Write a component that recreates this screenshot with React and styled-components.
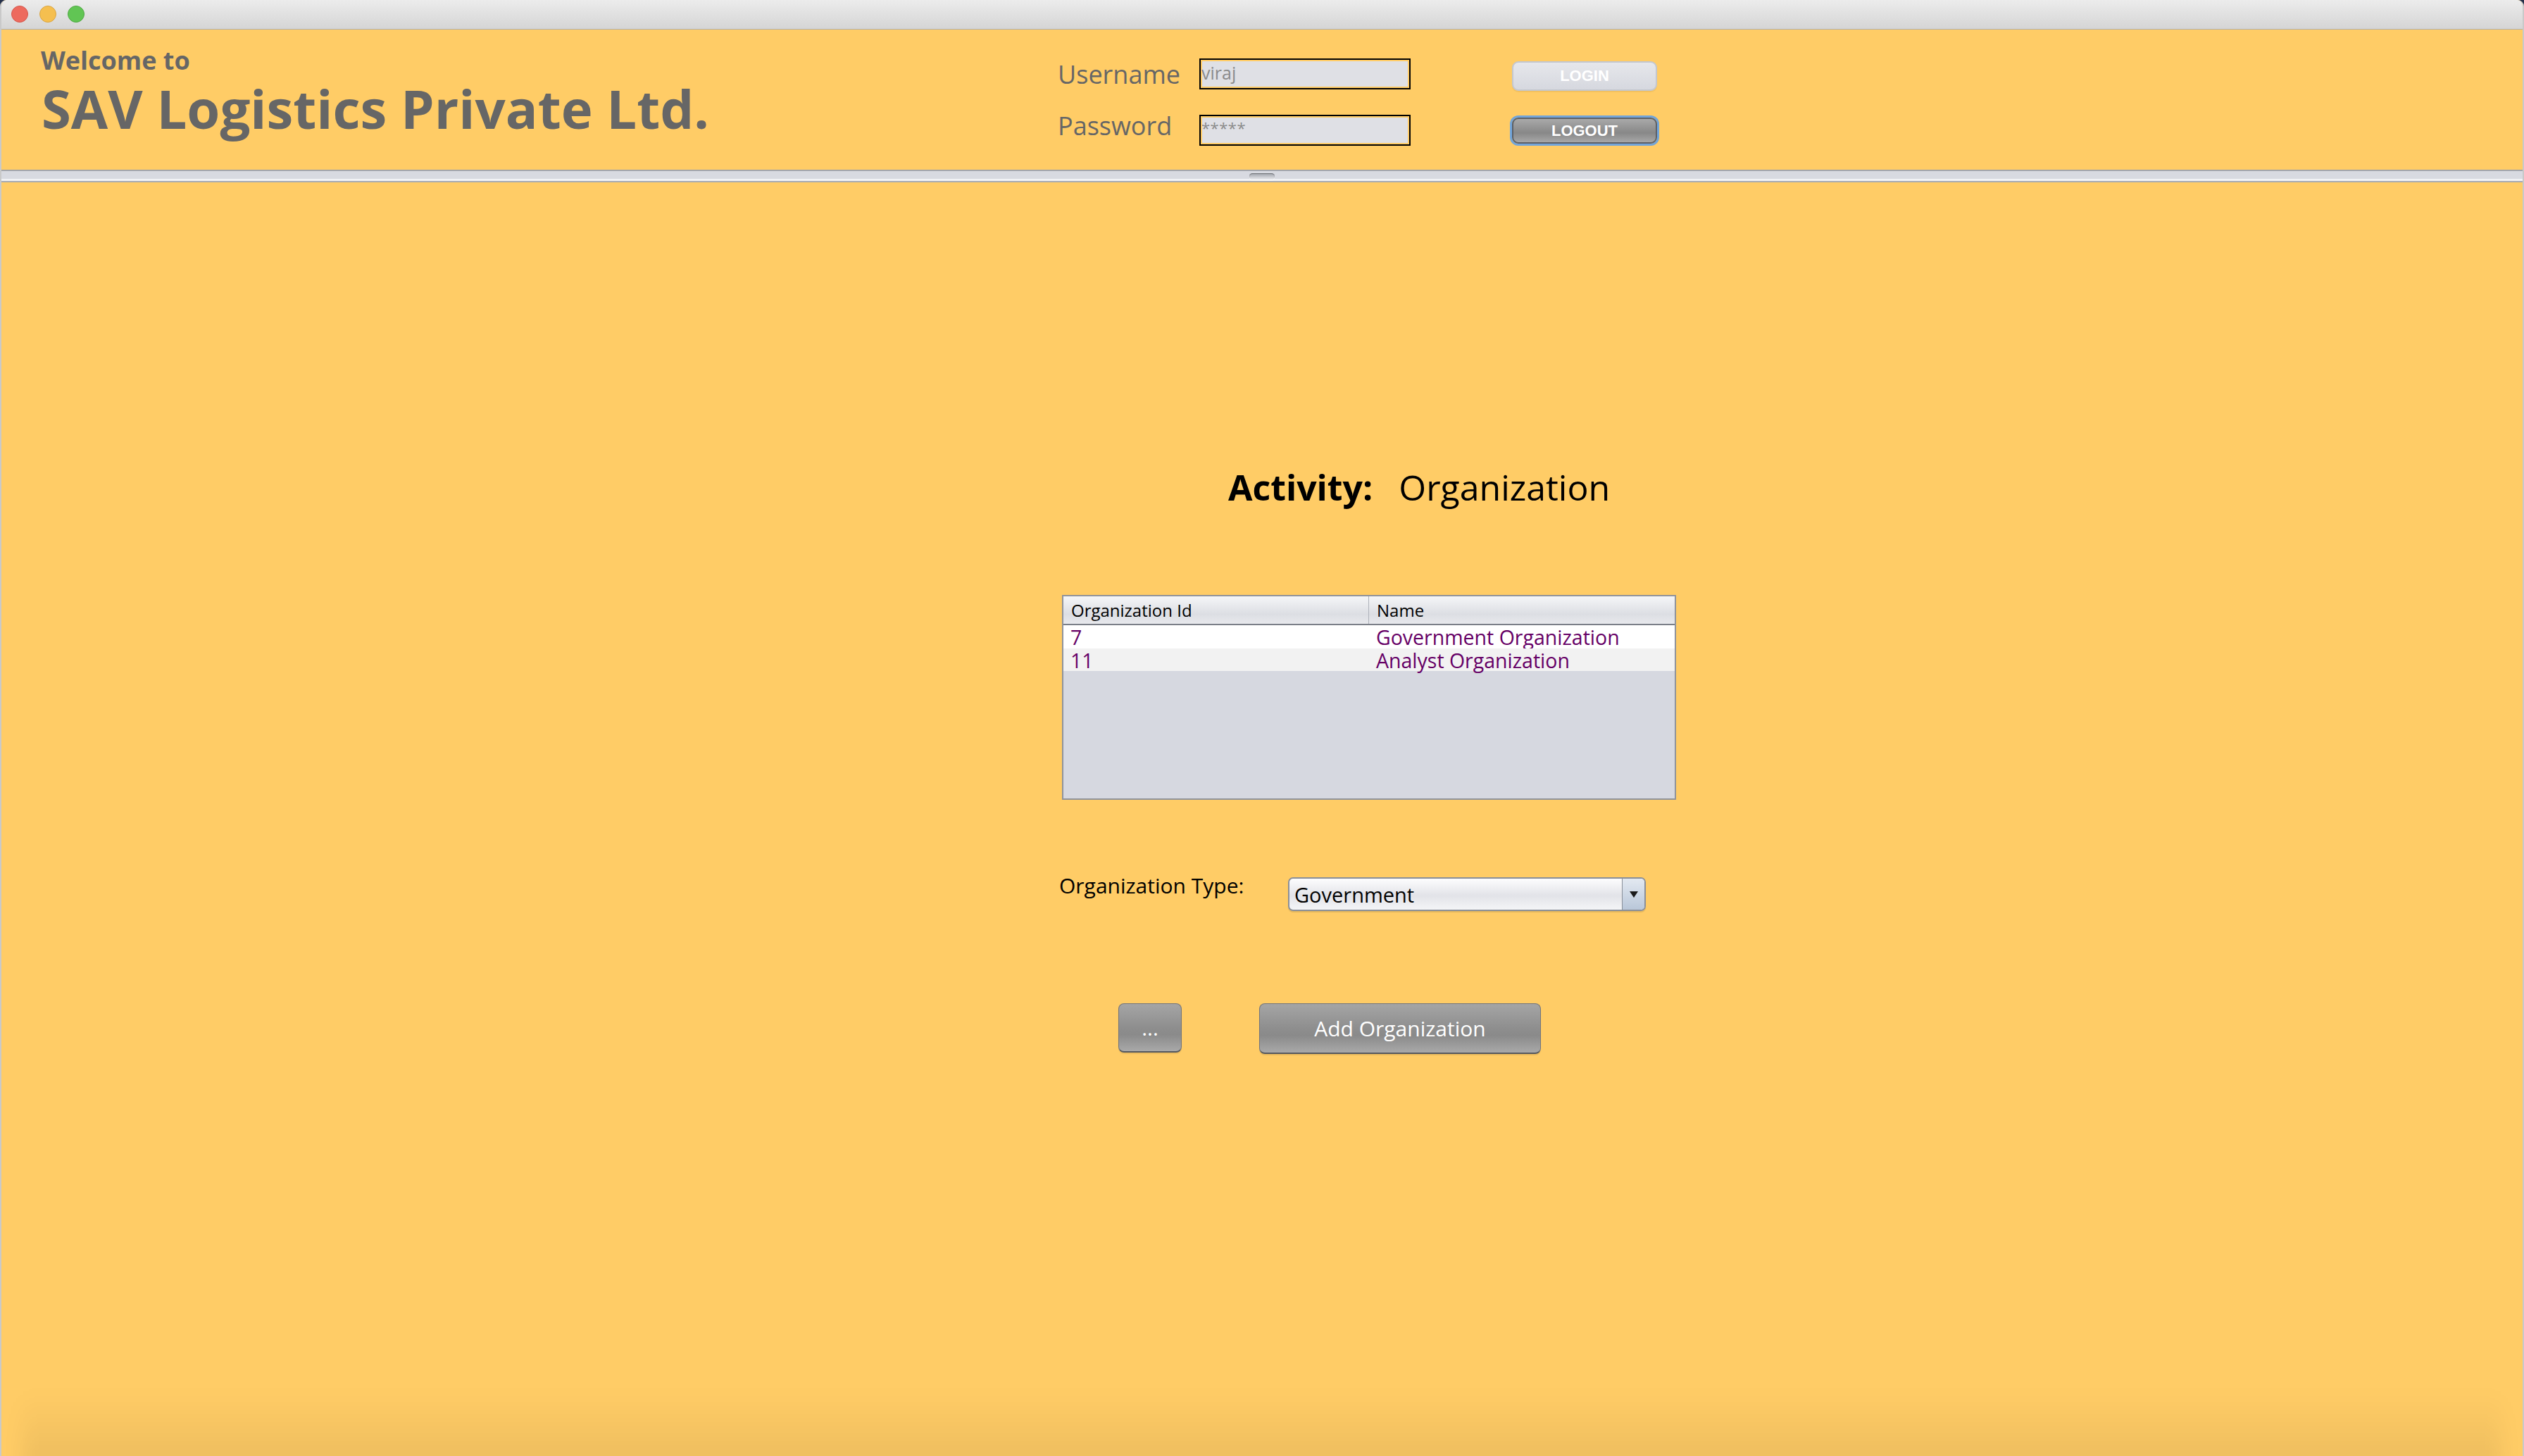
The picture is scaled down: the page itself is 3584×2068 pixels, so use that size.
import React from "react";
import styled, { createGlobalStyle } from "styled-components";

const GlobalStyle = createGlobalStyle`
  html, body {
    margin: 0;
    padding: 0;
    background: #25304a;
  }
  body {
    font-family: "Open Sans", "Noto Sans", sans-serif;
  }
`;

const rows = [
  { id: "7", name: "Government Organization" },
  { id: "11", name: "Analyst Organization" },
];

export default function App() {
  return (
    <>
      <GlobalStyle />
      <Window>
        <TitleBar>
          <Light $fill="#ed6a5e" $edge="#d4574b" />
          <Light $fill="#f5bf4f" $edge="#d9a440" />
          <Light $fill="#61c554" $edge="#4fa843" />
        </TitleBar>

        <Header>
          <Brand>
            <Welcome>Welcome to</Welcome>
            <Company>SAV Logistics Private Ltd.</Company>
          </Brand>
          <LoginForm>
            <FieldLabel $shift={5}>Username</FieldLabel>
            <Field $pad={6}>viraj</Field>
            <HeaderButton $shift={4} $height={42}>LOGIN</HeaderButton>
            <FieldLabel $shift={-2}>Password</FieldLabel>
            <Field $pad={4} $stars>*****</Field>
            <HeaderButton $dark $shift={4} $height={37}>LOGOUT</HeaderButton>
          </LoginForm>
        </Header>

        <Divider>
          <Grip />
        </Divider>

        <Main>
          <Heading>
            <strong>Activity:</strong>
            <span>Organization</span>
          </Heading>

          <Table>
            <TableHead>
              <HeadCell $divider>Organization Id</HeadCell>
              <HeadCell>Name</HeadCell>
            </TableHead>
            {rows.map((r, i) => (
              <TableRow key={r.id} $alt={i % 2 === 1}>
                <Cell>{r.id}</Cell>
                <Cell>{r.name}</Cell>
              </TableRow>
            ))}
          </Table>

          <TypeRow>
            <TypeLabel>Organization Type:</TypeLabel>
            <Combo>
              <ComboText>Government</ComboText>
              <ComboArrow>
                <svg width="12" height="9" viewBox="0 0 12 9">
                  <path d="M0 0 L12 0 L6 9 Z" fill="#1b1b1b" />
                </svg>
              </ComboArrow>
            </Combo>
          </TypeRow>

          <ActionRow>
            <GrayButton $width={90} $height={70}>...</GrayButton>
            <GrayButton $width={400} $height={72}>Add Organization</GrayButton>
          </ActionRow>

          <BottomShade />
        </Main>
      </Window>
    </>
  );
}

const Window = styled.div`
  width: 3584px;
  height: 2068px;
  display: flex;
  flex-direction: column;
  background: #ffcc66;
  border-radius: 9px 9px 0 0;
  overflow: hidden;
  box-sizing: border-box;
  border-left: 2px solid #c9c9c9;
  border-right: 2px solid #c9c9c9;
`;

const TitleBar = styled.div`
  height: 42px;
  flex: 0 0 42px;
  box-sizing: border-box;
  display: flex;
  align-items: center;
  gap: 16px;
  padding: 0 0 2px 14px;
  background: linear-gradient(#ececec, #d5d5d5);
  border-bottom: 1px solid #b0b0b0;
`;

const Light = styled.span`
  width: 24px;
  height: 24px;
  border-radius: 50%;
  box-sizing: border-box;
  background: ${p => p.$fill};
  border: 1px solid ${p => p.$edge};
`;

const Header = styled.div`
  height: 199px;
  flex: 0 0 199px;
  display: flex;
  background: #ffcc66;
`;

const Brand = styled.div`
  flex: 0 0 1500px;
  box-sizing: border-box;
  padding: 26px 0 0 56px;
  color: #666666;
  font-weight: 700;
  line-height: 1;
`;

const Welcome = styled.div`
  font-size: 36px;
`;

const Company = styled.div`
  font-size: 76px;
  margin-top: 12px;
  padding-left: 1px;
`;

const LoginForm = styled.div`
  display: grid;
  grid-template-columns: 201px 300px auto;
  grid-template-rows: 44px 44px;
  row-gap: 36px;
  padding-top: 41px;
  align-items: start;
`;

const FieldLabel = styled.div`
  font-size: 36px;
  line-height: 1;
  color: #666666;
  margin-top: ${p => p.$shift}px;
`;

const Field = styled.div`
  height: 44px;
  box-sizing: border-box;
  border: 2px solid #000;
  box-shadow: inset 0 0 0 2px #ffcc66;
  background: #dfe0e5;
  padding: ${p => p.$pad}px 0 0 1px;
  font-size: ${p => (p.$stars ? 22 : 25)}px;
  line-height: 25px;
  color: #8b8b8b;
  letter-spacing: ${p => (p.$stars ? "0.5px" : "0")};
`;

const HeaderButton = styled.div`
  width: 206px;
  height: ${p => p.$height}px;
  margin: ${p => p.$shift}px 0 0 144px;
  box-sizing: border-box;
  display: flex;
  align-items: center;
  justify-content: center;
  border-radius: 9px;
  font-family: "Liberation Sans", Arial, sans-serif;
  font-weight: 700;
  font-size: 22px;
  color: #ffffff;
  background: ${p =>
    p.$dark
      ? "linear-gradient(#a9a9a9 0%, #8d8d8d 50%, #888 60%, #a8a8a8 100%)"
      : "linear-gradient(#e6e7eb, #d6d8df)"};
  border: 2px solid ${p => (p.$dark ? "#5d6066" : "#c3c7cf")};
  box-shadow: ${p =>
    p.$dark ? "0 0 0 3px #72a5da" : "0 2px 0 rgba(0, 0, 0, 0.05)"};
`;

const Divider = styled.div`
  height: 18px;
  flex: 0 0 18px;
  box-sizing: border-box;
  display: flex;
  align-items: center;
  justify-content: center;
  border-top: 2px solid #a2a5ac;
  border-bottom: 2px solid #a7aab1;
  background: linear-gradient(#d8dae1 0%, #d8dae1 82%, #f1f2f5 82%, #f1f2f5 100%);
`;

const Grip = styled.div`
  width: 36px;
  height: 9px;
  border-radius: 5px;
  background: linear-gradient(#9da1a9, #e8e9ed);
  box-shadow: inset 0 1px 1px rgba(0, 0, 0, 0.3), 0 1px 0 #ffffff;
`;

const Main = styled.div`
  flex: 1;
  position: relative;
  overflow: hidden;
  box-sizing: border-box;
  padding: 408px 0 0 1502px;
  background: #ffcc66;
`;

const Heading = styled.div`
  display: flex;
  gap: 37px;
  margin-left: 240px;
  font-size: 50px;
  line-height: 1;
  color: #000;

  & strong {
    font-weight: 700;
  }
`;

const Table = styled.div`
  margin: 128px 0 0 4px;
  width: 872px;
  height: 291px;
  box-sizing: border-box;
  border: 2px solid #8f939b;
  background: #d6d8e0;
  display: flex;
  flex-direction: column;
`;

const TableHead = styled.div`
  display: grid;
  grid-template-columns: 434px 1fr;
  height: 41px;
  box-sizing: border-box;
  border-bottom: 2px solid #7b7f88;
  background: linear-gradient(#f5f6f8, #dcdee3 65%, #e8e9ed);
`;

const HeadCell = styled.div`
  font-size: 24px;
  line-height: 39px;
  padding-left: 11px;
  color: #000;
  border-right: ${p => (p.$divider ? "1px solid #aeb2ba" : "none")};
`;

const TableRow = styled.div`
  display: grid;
  grid-template-columns: 434px 1fr;
  height: ${p => (p.$alt ? 32 : 33)}px;
  background: ${p => (p.$alt ? "#f2f2f2" : "#ffffff")};
`;

const Cell = styled.div`
  font-size: 28.5px;
  line-height: 29px;
  padding: 3px 0 0 10px;
  color: #660066;
  white-space: nowrap;
`;

const TypeRow = styled.div`
  display: grid;
  grid-template-columns: 325px 508px;
  align-items: start;
  margin-top: 110px;
`;

const TypeLabel = styled.div`
  font-size: 30px;
  line-height: 1;
  margin-top: -3px;
  color: #000;
`;

const Combo = styled.div`
  height: 48px;
  box-sizing: border-box;
  display: flex;
  border: 2px solid #8a8f99;
  border-radius: 7px;
  overflow: hidden;
  background: linear-gradient(#fdfdfe, #e2e3e8 55%, #f4f5f7);
  box-shadow: 0 2px 1px rgba(0, 0, 0, 0.1);
`;

const ComboText = styled.div`
  flex: 1;
  font-size: 29px;
  line-height: 45px;
  padding-left: 7px;
  color: #000;
`;

const ComboArrow = styled.div`
  width: 31px;
  display: flex;
  align-items: center;
  justify-content: center;
  border-left: 1px solid #8a909a;
  background: linear-gradient(#e3e9f1, #b9c7d9);
`;

const ActionRow = styled.div`
  display: flex;
  align-items: flex-start;
  gap: 110px;
  margin-top: 131px;
  padding-left: 84px;
`;

const GrayButton = styled.div`
  width: ${p => p.$width}px;
  height: ${p => p.$height}px;
  box-sizing: border-box;
  display: flex;
  align-items: center;
  justify-content: center;
  border-radius: 8px;
  border: 1px solid #72757b;
  border-bottom: 2px solid #55585e;
  background: linear-gradient(#a5a5a5 0%, #8e8e8e 50%, #8a8a8a 65%, #a9a9a9 100%);
  box-shadow: 0 2px 1px rgba(0, 0, 0, 0.08);
  font-size: 30px;
  color: #ffffff;
`;

const BottomShade = styled.div`
  position: absolute;
  left: 30px;
  right: 30px;
  bottom: -20px;
  height: 110px;
  background: linear-gradient(rgba(0, 0, 0, 0), rgba(0, 0, 0, 0.08));
  filter: blur(14px);
  pointer-events: none;
`;
